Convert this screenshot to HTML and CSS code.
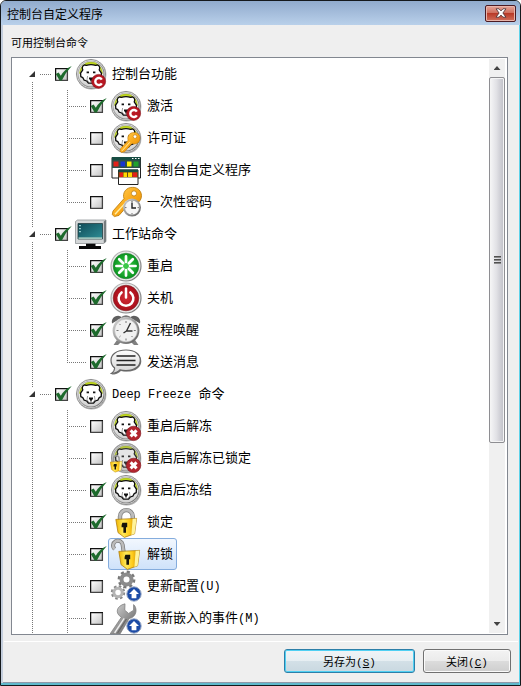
FILE: index.html
```html
<!DOCTYPE html>
<html lang="zh-CN">
<head>
  <meta charset="UTF-8">
  <meta name="viewport" content="width=device-width, initial-scale=1.0">
  <title>控制台自定义程序</title>
  <link rel="stylesheet" href="styles.css">
</head>
<body>
  <svg class="sprite" aria-hidden="true">
    <defs>
      <linearGradient id="ring" x1="0" y1="0" x2="1" y2="1">
        <stop offset="0" stop-color="#bdbdbd"/><stop offset="0.5" stop-color="#a0a0a0"/><stop offset="1" stop-color="#6a6a6a"/>
      </linearGradient>
      <linearGradient id="gold" x1="0" y1="0" x2="1" y2="1">
        <stop offset="0" stop-color="#ffd860"/><stop offset="0.5" stop-color="#fbaa1c"/><stop offset="1" stop-color="#dd8500"/>
      </linearGradient>
      <linearGradient id="brass" x1="0" y1="0" x2="1" y2="0">
        <stop offset="0" stop-color="#f0b400"/><stop offset="0.35" stop-color="#ffe95a"/><stop offset="0.65" stop-color="#ffcc1c"/><stop offset="1" stop-color="#c98500"/>
      </linearGradient>
      <linearGradient id="steel" x1="0" y1="0" x2="1" y2="1">
        <stop offset="0" stop-color="#dedede"/><stop offset="0.5" stop-color="#999"/><stop offset="1" stop-color="#555"/>
      </linearGradient>
      <linearGradient id="snow" x1="0" y1="0" x2="0" y2="1">
        <stop offset="0" stop-color="#fff"/><stop offset="1" stop-color="#d2d2d2"/>
      </linearGradient>
      <linearGradient id="teal" x1="0" y1="0" x2="1" y2="1">
        <stop offset="0" stop-color="#0f4a57"/><stop offset="1" stop-color="#2f8f97"/>
      </linearGradient>
      <radialGradient id="green"><stop offset="0" stop-color="#3fd04a"/><stop offset="1" stop-color="#0a9420"/></radialGradient>
      <radialGradient id="red"><stop offset="0" stop-color="#d22a35"/><stop offset="1" stop-color="#a80f1b"/></radialGradient>

      <symbol id="bear" viewBox="0 0 32 32">
        <circle cx="16.6" cy="16.8" r="14.8" fill="#666" opacity=".5"/>
        <circle cx="16" cy="16" r="14.6" fill="#ececec" stroke="#909090" stroke-width="1"/>
        <circle cx="16" cy="16" r="13" fill="url(#snow)" stroke="url(#ring)" stroke-width="1.2"/>
        <path d="M4.6 15.5A11.4 11.4 0 0 1 27.4 15.5L25 11L21 7.5H11L7 11z" fill="#bfd61c" stroke="#9cb30f" stroke-width=".6"/>
        <path d="M7.6 8.6Q8.6 6.2 11.4 7.4Q16 5.8 20.6 7.4Q23.4 6.2 24.4 8.6Q25.2 10.4 24.2 11.8L26.4 15.2L26.2 18.6L24.2 19.6L22.8 22.2L20.2 23L18.6 25.2H13.4L11.8 23L9.2 22.2L7.8 19.6L5.8 18.6L5.6 15.2L7.8 11.8Q6.8 10.4 7.6 8.6z" fill="#fff" stroke="#0c0c0c" stroke-width="1.3" stroke-linejoin="round"/>
        <path d="M12.6 18L12 21.6L13.6 24M19.4 18L20 21.6L18.4 24" fill="none" stroke="#777" stroke-width=".7"/>
        <path d="M11.6 13.4h2.4v1.8h-2.4zM18 13.4h2.4v1.8H18zM14 19.4h4v1.6l-1.3 1.2v1.4h-1.4v-1.4L14 21z" fill="#111"/>
      </symbol>
      <symbol id="badge-c" viewBox="0 0 32 32">
        <circle cx="23.6" cy="23.4" r="7" fill="#b81722" stroke="#7f0b13" stroke-width=".6"/>
        <path d="M26.8 21.7A3.5 3.5 0 1 0 26.8 25.3" fill="none" stroke="#fff" stroke-width="2.4"/>
      </symbol>
      <symbol id="badge-x" viewBox="0 0 32 32">
        <circle cx="23.6" cy="23.4" r="7.2" fill="#b3262f" stroke="#7c1118" stroke-width=".6"/>
        <path d="M20.6 20.4L26.6 26.4M26.6 20.4L20.6 26.4" stroke="#fff" stroke-width="3"/>
      </symbol>
      <symbol id="badge-up" viewBox="0 0 32 32">
        <circle cx="24" cy="24" r="7.2" fill="#1c4ba6" stroke="#9aa9c4" stroke-width="1"/>
        <path d="M24 18.9L29 24.1H26.4V28.3H21.6V24.1H19z" fill="#fff"/>
      </symbol>
      <symbol id="key" viewBox="0 0 32 32">
        <path d="M22.3 1.4A8.4 8.4 0 1 1 19.6 17.4L9 29.4L4.4 30.6L2.2 28.6L3 25L14 12.6A8.4 8.4 0 0 1 22.3 1.4z" fill="url(#gold)" stroke="#b97808" stroke-width=".8"/>
        <circle cx="24" cy="7.4" r="2.6" fill="#fff" stroke="#b97808" stroke-width=".8"/>
        <path d="M5 28.2L16.6 15.6" stroke="#fff0a8" stroke-width="1.4"/>
      </symbol>
      <symbol id="padlock" viewBox="0 0 32 32">
        <path d="M5.8 13.4L26.6 12.4L24.6 27.8L14.4 31.4L8 26.6z" fill="url(#brass)" stroke="#a87300" stroke-width=".7"/>
        <path d="M22.6 12.8L26.6 12.4L24.6 27.8L21.4 28.9z" fill="#fff39a"/>
        <path d="M12.4 16.8h4.8v4.4h-1.2v5.6h-2.6v-5.6h-1.8v-2.2z" fill="#16130a"/>
      </symbol>
    </defs>
  </svg>

  <main class="dialog">
    <header class="titlebar">
      <h1>控制台自定义程序</h1>
      <button class="close" type="button" aria-label="关闭">
        <svg width="12" height="10" viewBox="0 0 12 10"><path d="M1 .8H4L6 2.9L8 .8H11L7.9 5L11 9.2H8L6 7.1L4 9.2H1L4.1 5z" fill="#fff" stroke="#54383b" stroke-width=".9"/></svg>
      </button>
    </header>

    <section class="content">
      <h2>可用控制台命令</h2>
      <div class="listbox">
        <ul class="tree">
          <li class="group">
            <div class="row root">
              <button class="expander" type="button" aria-label="折叠"></button>
              <input type="checkbox" id="console" checked>
              <label for="console"><svg class="icon" viewBox="0 0 32 32"><use href="#bear"/><use href="#badge-c"/></svg>控制台功能</label>
            </div>
            <ul>
              <li class="row">
                <input type="checkbox" id="activate" checked>
                <label for="activate"><svg class="icon" viewBox="0 0 32 32"><use href="#bear"/><use href="#badge-c"/></svg>激活</label>
              </li>
              <li class="row">
                <input type="checkbox" id="license">
                <label for="license"><svg class="icon" viewBox="0 0 32 32"><use href="#bear"/><use href="#key" x="8.5" y="9.5" width="22" height="22"/></svg>许可证</label>
              </li>
              <li class="row">
                <input type="checkbox" id="customizer">
                <label for="customizer"><svg class="icon" viewBox="0 0 32 32">
                  <path d="M2 3.5h28.5v20.5H2z" fill="#fff" stroke="#222"/>
                  <path d="M2 3h28.5v3H2z" fill="#174d43"/>
                  <path d="M2 6h28.5v8H2z" fill="#2f4f4a"/>
                  <path d="M22 4h1.5v1H22zM25 4h1.5v1H25zM28 4h1.5v1H28z" fill="#fff"/>
                  <path d="M3.5 7.5h5v5h-5z" fill="#e32119"/><path d="M10.5 7.5h4.5v5h-4.5z" fill="#1834d0"/><path d="M17 7.5h4.500v5h-4.500z" fill="#fff000"/><path d="M23.500 7.500h5v5h-5z" fill="#20a22d"/>
                  <path d="M8.500 16h19.500v14.500H8.500z" fill="#fff" stroke="#222"/>
                  <path d="M8.500 15.500h19.500v2.500H8.500z" fill="#174d43"/>
                  <path d="M8.500 18h19.500v5.500H8.500z" fill="#684d13"/><path d="M9.500 18.500h3.500v4.500H9.500zM22.500 18.500h4.500v4.500h-4.500z" fill="#e32119"/><path d="M13.500 18.500h3.500v4.500h-3.500zM18 18.500h4v4.500h-4z" fill="#ffd900"/>
                </svg>控制台自定义程序</label>
              </li>
              <li class="row">
                <input type="checkbox" id="otp">
                <label for="otp"><svg class="icon" viewBox="0 0 32 32"><use href="#key"/>
                  <circle cx="22" cy="21.600" r="9" fill="url(#steel)"/><circle cx="22" cy="21.600" r="7.400" fill="#f7f7f7" stroke="#888" stroke-width=".5"/>
                  <path d="M22 16.600V22H26" fill="none" stroke="#222" stroke-width="1.4"/>
                  <path d="M22 14.800v1.200M22 27.200v1.200M15.200 21.600h1.200M27.600 21.600h1.200" stroke="#555"/>
                </svg>一次性密码</label>
              </li>
            </ul>
          </li>

          <li class="group">
            <div class="row root">
              <button class="expander" type="button" aria-label="折叠"></button>
              <input type="checkbox" id="workstation" checked>
              <label for="workstation"><svg class="icon" viewBox="0 0 32 32">
                <path d="M.5 3.500L2.500 2H31V23.500L28.500 25.500H.5z" fill="#d4d7d8" stroke="#858a8c" stroke-width=".7"/>
                <path d="M28.800 3.500L31 2V23.500L28.800 25.500z" fill="#777c7e"/>
                <path d="M3 5.500h24.500v15.500H3z" fill="url(#teal)" stroke="#263f43" stroke-width=".8"/>
                <path d="M4.200 7h1.600v1.300H4.200zM4.200 10h1.600v1.300H4.200zM4.200 13h1.600v1.300H4.200z" fill="#aee5e5"/>
                <path d="M3.500 19.300h23.500V21h-23.500z" fill="#9fc4bc"/>
                <path d="M11 25.800h9.500v2.200h5.500v3h-22v-3h7z" fill="#090909"/>
              </svg>工作站命令</label>
            </div>
            <ul>
              <li class="row">
                <input type="checkbox" id="restart" checked>
                <label for="restart"><svg class="icon" viewBox="0 0 32 32">
                  <circle cx="16" cy="16" r="15.600" fill="url(#ring)"/><circle cx="16" cy="16" r="14.400" fill="#e8e8e8"/><circle cx="16" cy="16" r="12.800" fill="url(#green)" stroke="#1e7a2b" stroke-width=".6"/>
                  <path d="M16 6.400v5.600M16 20v5.600M6.400 16h5.600M20 16h5.600M9.200 9.200l4 4M18.800 18.800l4 4M9.200 22.800l4-4M18.800 13.200l4-4" stroke="#fff" stroke-width="2.700" stroke-linecap="round"/>
                </svg>重启</label>
              </li>
              <li class="row">
                <input type="checkbox" id="shutdown" checked>
                <label for="shutdown"><svg class="icon" viewBox="0 0 32 32">
                  <circle cx="16" cy="16" r="15.600" fill="url(#ring)"/><circle cx="16" cy="16" r="14.400" fill="#e8e8e8"/><circle cx="16" cy="16" r="12.800" fill="url(#red)" stroke="#7a1e22" stroke-width=".6"/>
                  <path d="M11.600 10.400A7.400 7.400 0 1 0 20.400 10.400M16 6.400V15.400" fill="none" stroke="#fff" stroke-width="2.500" stroke-linecap="round"/>
                </svg>关机</label>
              </li>
              <li class="row">
                <input type="checkbox" id="wake" checked>
                <label for="wake"><svg class="icon" viewBox="0 0 32 32">
                  <path d="M7 26L3.500 31H8L11 28zM25 26l3.500 5H24l-3-3z" fill="#808080"/>
                  <path d="M2 9.500Q1 5 5 2.600Q9 .6 12 3.400zM30 9.500Q31 5 27 2.600Q23 .6 20 3.400z" fill="#5f5f5f"/>
                  <path d="M12 3.500Q16 .8 20 3.500" fill="none" stroke="#777" stroke-width="1.6"/>
                  <circle cx="16" cy="16.500" r="13.400" fill="url(#steel)"/><circle cx="16" cy="16.500" r="11.400" fill="#f1f1f1" stroke="#b3b3b3" stroke-width=".6"/>
                  <path d="M20.500 9L16.500 17H22.500M16.500 17L13.500 19" fill="none" stroke="#333" stroke-width="1.4"/>
                  <path d="M16 7v2M16 24.500v2M6.500 16.500h2M23.800 16.500h2M9.400 9.900l1.100 1.100M9.400 23.100l1.100-1.100M22.600 23.100l-1.100-1.100" stroke="#777"/>
                </svg>远程唤醒</label>
              </li>
              <li class="row">
                <input type="checkbox" id="message" checked>
                <label for="message"><svg class="icon" viewBox="0 0 32 32">
                  <path d="M17 5C26.200 5 31.300 9.400 31.300 15.200S26 25.600 17 25.600C14.700 25.600 12.700 25.400 10.900 24.900C8.800 27.300 5.500 28.500 1.500 28.500C4 26.600 4.800 24.900 4.900 22.800C2.800 21 1.500 18.500 1.500 15.200C1.500 9.400 7.600 5 17 5z" fill="#777"/>
                  <path d="M16 4C25.200 4 30.300 8.400 30.300 14.200S25 24.600 16 24.600C13.700 24.600 11.700 24.400 9.900 23.900C8 26.200 5 27.200 1.700 27.300C4 25.600 4.800 23.700 4.500 21.800C2.300 20 1 17.500 1 14.200C1 8.400 6.600 4 16 4z" fill="url(#snow)" stroke="#666" stroke-width="1.2"/>
                  <path d="M6.500 10h19M6.500 14.500h19M6.500 19h19" stroke="#222" stroke-width="1.700"/>
                </svg>发送消息</label>
              </li>
            </ul>
          </li>

          <li class="group continues">
            <div class="row root">
              <button class="expander" type="button" aria-label="折叠"></button>
              <input type="checkbox" id="deepfreeze" checked>
              <label for="deepfreeze"><svg class="icon" viewBox="0 0 32 32"><use href="#bear"/></svg><span><span class="latin">Deep Freeze </span>命令</span></label>
            </div>
            <ul>
              <li class="row">
                <input type="checkbox" id="thaw">
                <label for="thaw"><svg class="icon" viewBox="0 0 32 32"><use href="#bear"/><use href="#badge-x"/></svg>重启后解冻</label>
              </li>
              <li class="row">
                <input type="checkbox" id="thaw-locked">
                <label for="thaw-locked"><svg class="icon" viewBox="0 0 32 32"><circle cx="16" cy="16" r="15" fill="#999"/><use href="#bear" opacity=".75"/><path d="M3.500 20v-3.500a2.800 2.800 0 0 1 5.600 0V20" fill="none" stroke="#999" stroke-width="1.600"/><use href="#padlock" x="-3" y="12" width="18" height="19"/><use href="#badge-x"/></svg>重启后解冻已锁定</label>
              </li>
              <li class="row">
                <input type="checkbox" id="frozen" checked>
                <label for="frozen"><svg class="icon" viewBox="0 0 32 32"><use href="#bear"/></svg>重启后冻结</label>
              </li>
              <li class="row">
                <input type="checkbox" id="lock" checked>
                <label for="lock"><svg class="icon" viewBox="0 0 32 32">
                  <path d="M10 14V10.500a6.400 6.400 0 0 1 12.800 0V14" fill="none" stroke="#777" stroke-width="4.400"/>
                  <path d="M10 14V10.500a6.400 6.400 0 0 1 12.800 0V14" fill="none" stroke="#bbb" stroke-width="3"/>
                  <use href="#padlock"/>
                </svg>锁定</label>
              </li>
              <li class="row">
                <input type="checkbox" id="unlock" checked>
                <label for="unlock" class="selected"><svg class="icon" viewBox="0 0 32 32">
                  <path d="M4.600 11A4.800 4.800 0 1 1 12.600 6.600L13.800 15" fill="none" stroke="#777" stroke-width="4"/>
                  <path d="M4.600 11A4.800 4.800 0 1 1 12.600 6.600L13.800 15" fill="none" stroke="#bbb" stroke-width="2.600"/>
                  <use href="#padlock" x="3"/>
                </svg>解锁</label>
              </li>
              <li class="row">
                <input type="checkbox" id="config">
                <label for="config"><svg class="icon" viewBox="0 0 32 32">
                  <circle cx="16.500" cy="9.500" r="7.400" fill="none" stroke="#777" stroke-width="3" stroke-dasharray="3 2.810"/>
                  <circle cx="16.500" cy="9.500" r="5" fill="none" stroke="#8b8b8b" stroke-width="4"/>
                  <circle cx="8" cy="22.500" r="6" fill="none" stroke="#888" stroke-width="2.400" stroke-dasharray="2.500 2.210"/>
                  <circle cx="8" cy="22.500" r="4.200" fill="#fff" stroke="#b4b4b4" stroke-width="3"/>
                  <use href="#badge-up"/>
                </svg><span>更新配置<span class="latin">(U)</span></span></label>
              </li>
              <li class="row">
                <input type="checkbox" id="events">
                <label for="events"><svg class="icon" viewBox="0 0 32 32">
                  <path d="M15 1.800L14.800 8.200L18.600 11.400L23.600 8.200V2.600C27.200 5.800 27 12.600 22 15.600L19.200 16.600L10 32H0L11.400 15.200C4.700 11.500 6.200 3.800 15 1.800z" fill="url(#steel)" stroke="#777" stroke-width=".7"/>
                  <path d="M4.600 31L14.200 16.400" stroke="#eee" stroke-width="1.4"/><path d="M7.600 31L16.400 17" stroke="#666" stroke-width="1.2"/>
                  <use href="#badge-up"/>
                </svg><span>更新嵌入的事件<span class="latin">(M)</span></span></label>
              </li>
            </ul>
          </li>
        </ul>

        <div class="scrollbar">
          <button type="button" class="up" aria-label="向上滚动"></button>
          <div class="track"><div class="thumb"><i></i><i></i><i></i></div></div>
          <button type="button" class="down" aria-label="向下滚动"></button>
        </div>
      </div>
    </section>

    <footer class="actions">
      <button type="button" class="save">另存为<span class="latin">(<u>S</u>)</span></button>
      <button type="button" class="dismiss">关闭<span class="latin">(<u>C</u>)</span></button>
    </footer>
  </main>
</body>
</html>
```
FILE: styles.css
```css
* {
  box-sizing: border-box;
}
body {
  margin: 0;
  background: #fff;
  color: #000;
  font-family: "Liberation Sans", "Noto Sans CJK SC", sans-serif;
  font-size: 13px;
}
h1, h2, ul {
  margin: 0;
  padding: 0;
  font-weight: normal;
  list-style: none;
}
button {
  padding: 0;
  font-family: inherit;
}
.sprite {
  display: block;
  width: 0;
  height: 0;
}

/* window frame */
.dialog {
  display: flex;
  flex-direction: column;
  height: 100vh;
  min-height: 300px;
  border: 1px solid #15191c;
  border-radius: 6px 6px 0 0;
  background: #efefef;
  box-shadow: inset -1px 0 #5fd3ea, inset 0 -2px #5fb9cc, inset 2px 0 #c4cedd, inset 0 -3px #8f98a8;
}
.titlebar {
  display: flex;
  justify-content: space-between;
  align-items: center;
  height: 24px;
  flex: none;
  padding: 0 4px 0 6px;
  border-radius: 5px 5px 0 0;
  background: linear-gradient(#91abcd, #b9d0ea);
}
.titlebar h1 {
  font-size: 12px;
}
.close {
  display: flex;
  align-items: center;
  justify-content: center;
  width: 31px;
  height: 17px;
  border: 1px solid #4b1a22;
  border-radius: 2px;
  background: linear-gradient(#e5a598, #d0705f 45%, #b93a28 50%, #d2705c);
  box-shadow: inset 0 0 0 1px #e8b5ab;
}

/* command list */
.content {
  display: flex;
  flex-direction: column;
  flex: 1;
  min-height: 0;
  padding: 10px 12px 6px 10px;
}
.content h2 {
  margin-bottom: 6px;
  font-size: 11px;
  line-height: 16px;
}
.listbox {
  display: flex;
  flex: 1;
  min-height: 0;
  border: 1px solid #828790;
  background: #fff;
}
.tree {
  flex: 1;
  overflow: hidden;
}
.tree ul {
  padding-left: 35px;
}
.group {
  background: repeating-linear-gradient(#777 0 1px, #fff 1px 2px) 20px 0 / 1px 100% no-repeat;
}
.group:first-child {
  background-position: 20px 24px;
}
.row {
  display: flex;
  align-items: center;
  height: 32px;
  padding-left: 43px;
  background:
    repeating-linear-gradient(#777 0 1px, #fff 1px 2px) 20px 0 / 1px 100% no-repeat,
    repeating-linear-gradient(90deg, #777 0 1px, #fff 1px 2px) 20px 16px / 20px 1px no-repeat;
}
.row:last-child {
  background-size: 1px 50%, 20px 1px;
}
.continues .row:last-child {
  background-size: 1px 100%, 20px 1px;
}
.row.root {
  padding-left: 14px;
  background: repeating-linear-gradient(90deg, #777 0 1px, #fff 1px 2px) 28px 16px / 12px 1px no-repeat;
}
.expander {
  width: 13px;
  height: 15px;
  margin-right: 16px;
  border: 0;
  background: #fff;
}
.expander::before {
  content: "";
  display: block;
  width: 6px;
  height: 6px;
  margin-left: 3px;
  background: #333;
  clip-path: polygon(100% 0, 100% 100%, 0 100%);
}
.row input {
  appearance: none;
  flex: none;
  width: 17px;
  height: 16px;
  margin: 0 1px 0 0;
  background: url("data:image/svg+xml,%3Csvg xmlns='http://www.w3.org/2000/svg' width='17' height='16'%3E%3ClinearGradient id='a' x2='1' y2='1'%3E%3Cstop stop-color='%23fff'/%3E%3Cstop offset='1' stop-color='%23c4c4c4'/%3E%3C/linearGradient%3E%3Cpath d='M1 3H12V14H1z' fill='url(%23a)'/%3E%3Cpath d='M.6 14V2.6H13' fill='none' stroke='%23111' stroke-width='1.3'/%3E%3Cpath d='M12.400 3V14.400H0' fill='none' stroke='%23444' stroke-width='1.3'/%3E%3C/svg%3E") no-repeat;
}
.row input:checked {
  background-image: url("data:image/svg+xml,%3Csvg xmlns='http://www.w3.org/2000/svg' width='17' height='16'%3E%3ClinearGradient id='a' x2='1' y2='1'%3E%3Cstop stop-color='%23fff'/%3E%3Cstop offset='1' stop-color='%23c4c4c4'/%3E%3C/linearGradient%3E%3Cpath d='M1 3H12V14H1z' fill='url(%23a)'/%3E%3Cpath d='M.6 14V2.600H13' fill='none' stroke='%23111' stroke-width='1.3'/%3E%3Cpath d='M12.400 3V14.400H0' fill='none' stroke='%23444' stroke-width='1.3'/%3E%3Cpath d='M.8 8L3.600 6.600L5.800 9.800Q9.500 3.200 16.800 0Q10.800 6 6.800 14.600H4.600z' fill='%231d6a2c'/%3E%3C/svg%3E");
}
.row label {
  display: flex;
  align-items: center;
  gap: 5px;
  height: 32px;
  padding: 0 3px 0 1px;
  border: 1px solid transparent;
  border-radius: 3px;
  line-height: 16px;
  white-space: pre;
}
.row .selected {
  border-color: #84acdd;
  background: linear-gradient(#f2f7fe, #cfe2fa);
}
.icon {
  flex: none;
  width: 32px;
  height: 32px;
}
.latin {
  font-family: "Liberation Mono", monospace;
  font-size: 12px;
}

/* scrollbar */
.scrollbar {
  display: flex;
  flex-direction: column;
  width: 16px;
  margin: 1px 2px 1px 0;
  background: #f0f0f0;
}
.scrollbar button {
  height: 18px;
  border: 0;
  background: none;
}
.scrollbar button::before {
  content: "";
  display: block;
  width: 7px;
  height: 4px;
  margin: 0 auto;
  background: #444;
}
.scrollbar .up::before {
  clip-path: polygon(50% 0, 100% 100%, 0 100%);
}
.scrollbar .down::before {
  clip-path: polygon(0 0, 100% 0, 50% 100%);
}
.track {
  flex: 1;
}
.thumb {
  display: flex;
  flex-direction: column;
  align-items: center;
  justify-content: center;
  gap: 1px;
  height: 68%;
  border: 1px solid #8e8e92;
  border-radius: 2px;
  background: linear-gradient(90deg, #f6f6f7, #e2e2e6 45%, #bebec6);
  box-shadow: inset 0 0 0 1px #f4f4f4;
}
.thumb i {
  width: 7px;
  height: 2px;
  background: linear-gradient(#333, #aaa);
}

/* bottom buttons */
.actions {
  display: flex;
  justify-content: flex-end;
  gap: 8px;
  flex: none;
  margin: 0 2px 3px 3px;
  padding: 7px 7px 9px;
  border-top: 1px solid #fff;
}
.actions button {
  height: 24px;
  border: 1px solid #707070;
  border-radius: 3px;
  background: linear-gradient(#f3f3f3, #ebebeb 49%, #dcdcdc 50%, #cecece);
  box-shadow: inset 0 0 0 1px #fafafa;
  font-family: "Noto Sans CJK SC", sans-serif;
  font-size: 11px;
  color: #000;
}
.actions .latin {
  font-size: 11px;
}
.actions .save {
  width: 131px;
  border-color: #2d7fa8;
  background: linear-gradient(#f0f4f6, #e6eef2 49%, #d3e0e7 50%, #c9d8e0);
  box-shadow: inset 0 0 0 1px #4fd0f3;
}
.actions .dismiss {
  width: 88px;
}
```
